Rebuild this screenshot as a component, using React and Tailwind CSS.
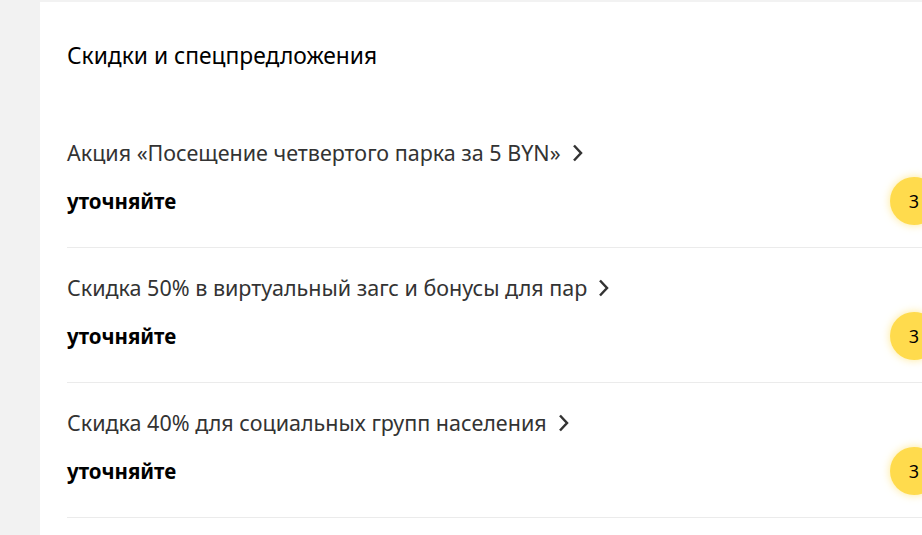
import React from 'react';

const offers = [
  'Акция «Посещение четвертого парка за 5 BYN»',
  'Скидка 50% в виртуальный загс и бонусы для пар',
  'Скидка 40% для социальных групп населения',
];

const Chevron = () => (
  <svg width="11" height="18" viewBox="0 0 11 18" fill="none" className="ml-[11px] shrink-0">
    <path d="M2 1.5l7 7.5-7 7.5" stroke="#333" strokeWidth="2.5" strokeLinejoin="miter" />
  </svg>
);

const OfferRow = ({ title }) => (
  <div className="border-b border-[#ebebeb] pt-[25px] pb-[31px]">
    <div className="flex items-center text-[21.5px] leading-[30px] text-[#333]">
      <span>{title}</span>
      <Chevron />
    </div>
    <div className="flex items-center justify-between mt-[18px] h-[30px]">
      <span className="text-[20.5px] leading-[30px] font-bold text-black">уточняйте</span>
      <div className="w-[48px] h-[48px] rounded-full bg-[#ffdb4d] shadow-[0_0_8px_rgba(255,219,77,0.6)] flex items-center justify-center text-[18px] text-black mr-[50px]">
        3
      </div>
    </div>
  </div>
);

export default function App() {
  return (
    <div className="w-[922px] h-[535px] overflow-hidden bg-[#f2f2f2] pl-[40px] pt-[2px]" style={{ fontFamily: '"Noto Sans", "Open Sans", sans-serif' }}>
      <div className="w-[948px] h-[600px] bg-white pl-[27px]">
        <h2 className="pt-[39px] text-[22.8px] leading-[30px] text-black font-normal">Скидки и спецпредложения</h2>
        <div className="mt-[42px]">
          {offers.map((t) => (
            <OfferRow key={t} title={t} />
          ))}
        </div>
      </div>
    </div>
  );
}
